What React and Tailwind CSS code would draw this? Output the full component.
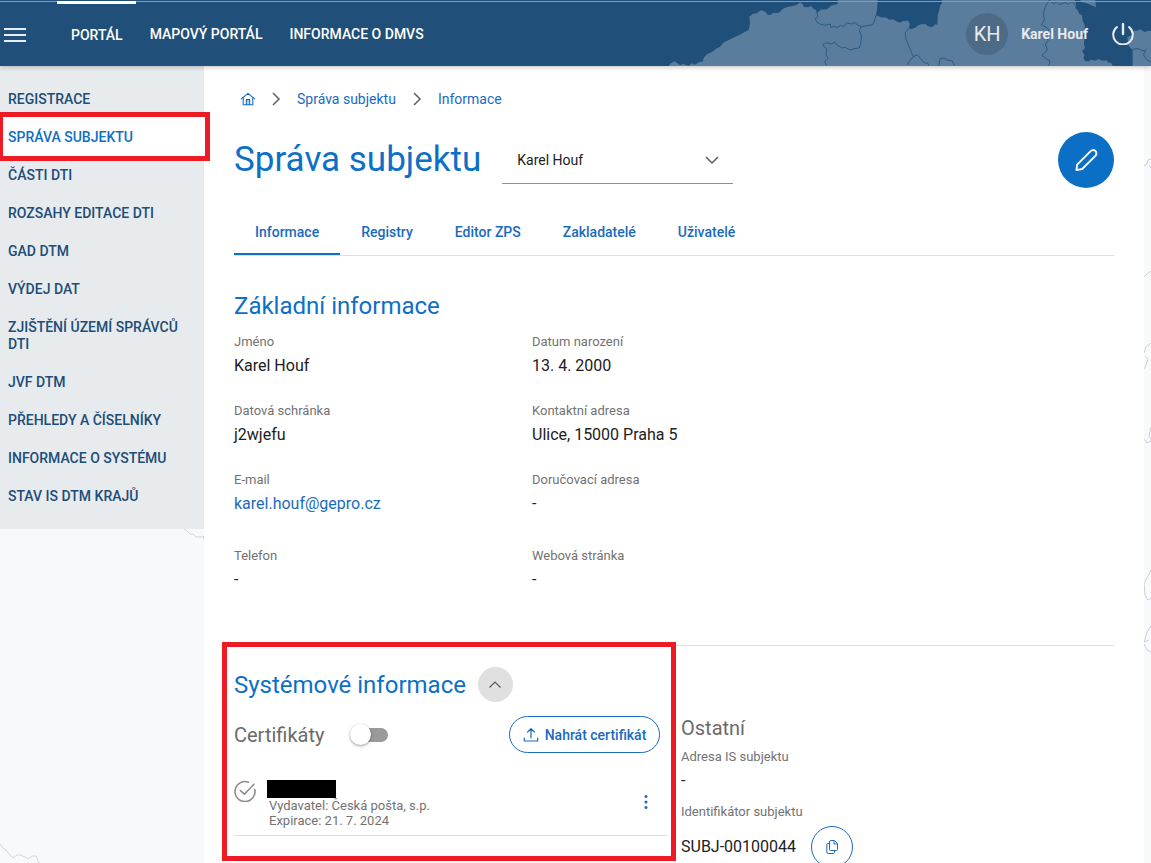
import React from 'react';

const topNav = [
  { label: 'PORTÁL', active: true },
  { label: 'MAPOVÝ PORTÁL' },
  { label: 'INFORMACE O DMVS' },
];

const sideNav = [
  'REGISTRACE',
  'SPRÁVA SUBJEKTU',
  'ČÁSTI DTI',
  'ROZSAHY EDITACE DTI',
  'GAD DTM',
  'VÝDEJ DAT',
  'ZJIŠTĚNÍ ÚZEMÍ SPRÁVCŮ DTI',
  'JVF DTM',
  'PŘEHLEDY A ČÍSELNÍKY',
  'INFORMACE O SYSTÉMU',
  'STAV IS DTM KRAJŮ',
];

const tabs = ['Informace', 'Registry', 'Editor ZPS', 'Zakladatelé', 'Uživatelé'];

function HeaderMap() {
  return (
    <svg className="absolute right-0 top-0 h-[66px] w-[511px]" viewBox="0 0 1533 198" aria-hidden="true">
      <g fill="#5a7d9d">
        <path d="M86 198L92 190L104 184L112 190L120 195L130 192L146 197L156 190L164 194L180 185H188L192 172L202 162L216 156L228 146L240 140L250 128L266 120L282 112L300 104L318 94L326 90L330 70L328 50L338 42L350 40L358 34L364 31L376 35L384 45L392 44L400 39L412 39L420 37L424 30L434 24L446 20L462 17L472 14L480 7L488 12L492 21L506 22L513 17L520 26L528 30L530 38L538 34L541 29L560 28L566 24L572 18L584 14L592 13L595 0H713L711 30L708 45L722 52L740 53L748 59L760 58L768 64L780 68L788 63L804 62L810 72L806 84L814 88L828 82L834 76L846 73L856 72L864 79L876 82L886 73L892 74L893 46L898 30L900 18L906 10V0H1304L1308 14L1306 24L1314 32L1318 42L1326 46L1328 62L1335 78L1332 88L1336 98L1328 106L1333 118L1332 132L1335 144L1326 154L1334 164L1330 174L1336 184L1348 184L1352 179L1366 182L1376 177L1386 182L1400 181L1404 187L1414 189L1418 198Z" />
        <path d="M1320 0H1366L1368 22L1352 15L1338 9L1326 7Z" />
        <path d="M1478 198V150L1466 138L1462 112L1478 104L1480 92L1492 92L1500 88L1514 96L1524 92L1533 93V198Z" />
      </g>
      <g fill="none" stroke="#2b5a83" strokeWidth="3" strokeLinejoin="round">
        <path d="M530 36L534 50L526 56L530 66L540 72L554 76L570 72L574 84L580 78L592 82L602 76L610 80L620 68L634 72L644 68L652 74L664 80L686 76L698 74L704 62L708 45" />
        <path d="M664 80L658 92L664 108L662 132L658 144L642 146L630 150L616 142L606 144L592 136L584 126L574 132L560 128L548 134L552 140L560 146L558 164L564 174L554 186L560 196" />
        <path d="M808 84L796 98L798 118L806 136L812 152L820 170L808 184L802 194" />
        <path d="M820 170L832 164L842 176L852 188L864 190L866 198" />
        <path d="M896 198L900 176L912 174L922 180L936 182L944 198" />
        <path d="M1228 0L1216 20L1210 42L1214 60L1204 74L1216 80L1226 88L1220 104L1224 122L1216 132L1222 150L1206 166L1216 174L1230 184L1226 198" />
        <path d="M1228 0L1240 12L1250 6L1258 14L1274 8L1286 12L1296 4L1306 16" />
        <path d="M1478 148L1494 146L1508 152L1518 150L1510 164L1516 172L1524 182L1533 184" />
      </g>
    </svg>
  );
}

function HomeIcon() {
  return (
    <svg className="h-4 w-4" viewBox="0 0 16 16" fill="none" stroke="currentColor" strokeWidth="1.1" strokeLinecap="round" strokeLinejoin="round" aria-hidden="true">
      <path d="M1.3 7.9L8 2.4L14.7 7.9" />
      <path d="M3.2 6.6V13.8H12.8V6.6" />
      <path d="M6.3 13.6V8.6H9.7V13.6" />
      <path d="M8 9V13.6" strokeWidth="0.6" />
    </svg>
  );
}

function Chevron({ className, d, w = 1.5 }) {
  return (
    <svg className={className} viewBox="0 0 16 16" fill="none" stroke="currentColor" strokeWidth={w} aria-hidden="true">
      <path d={d} />
    </svg>
  );
}

function Field({ label, children, className = 'h-[69px]' }) {
  return (
    <div className={className}>
      <dt className="text-[13px] leading-4 text-[#727272]">{label}</dt>
      <dd className="mt-1 text-base leading-6 text-[#212121]">{children}</dd>
    </div>
  );
}

export default function App() {
  return (
    <div className="flex h-screen flex-col overflow-hidden bg-[#f8f9fb] font-['Roboto','Liberation_Sans',sans-serif]">
      <header className="relative z-10 flex h-[66px] shrink-0 items-stretch bg-[#205079] shadow-[0_1px_5px_rgba(0,0,0,0.25)]">
        <HeaderMap />
        <div className="absolute inset-x-0 top-px h-px bg-[#7f9cb8]" />
        <div className="relative flex flex-1 items-stretch">
          <button type="button" aria-label="Menu" className="flex w-[57px] items-center pl-1 pt-1">
            <svg className="h-4 w-[22px]" viewBox="0 0 22 16" fill="#e9edf2" aria-hidden="true">
              <path d="M0 1h22v2H0zM0 7h22v2H0zM0 13h22v2H0z" />
            </svg>
          </button>
          <nav className="flex items-stretch pt-px text-sm font-medium text-white">
            {topNav.map((n) => (
              <a
                key={n.label}
                href="#"
                className={`flex items-center border-t-3 pl-3.5 pr-[13px] ${n.active ? 'border-white' : 'border-transparent pb-0.5'}`}
              >
                {n.label}
              </a>
            ))}
          </nav>
          <div className="ml-auto flex items-center pr-[17px] pt-0.5">
            <span className="flex h-[42px] w-[42px] items-center justify-center rounded-full bg-[#4d6b87] text-xl text-[#e8eaed]">KH</span>
            <span className="ml-[13px] text-sm font-bold text-[#e8eaed]">Karel Houf</span>
            <button type="button" aria-label="Odhlásit" className="ml-6 text-[#e8eaed]">
              <svg className="h-[22px] w-[22px]" viewBox="0 0 22 22" fill="none" stroke="currentColor" strokeWidth="2" strokeLinecap="round" aria-hidden="true">
                <path d="M11 1V11" strokeWidth="2.4" />
                <path d="M5 4A9.8 9.8 0 1 0 17 4" />
              </svg>
            </button>
          </div>
        </div>
      </header>

      <div className="relative flex min-h-0 flex-1">
        <svg className="absolute bottom-0 left-0 h-[334px] w-[204px]" viewBox="0 0 204 334" fill="none" stroke="#d3d7db" aria-hidden="true">
          <path d="M184 0L187 2L190 5H193L196 8H201L203 7L204 11" />
          <path d="M0 315L3 319L6 321L9 325L13 329L17 326L21 326L25 328L28 330L32 327L36 327L39 334" />
        </svg>
        <svg className="absolute right-0 top-0 h-full w-[7px]" viewBox="0 0 7 797" preserveAspectRatio="xMidYMin slice" fill="none" stroke="#cdd0d3" aria-hidden="true">
          <path d="M0 100L3 98L4 94L7 93M5 99L7 102M0 211L3 208L7 205M7 277L2 281L0 287M1 290L4 293L2 299L0 303M7 361L5 370L7 373M0 373L3 377L7 375M7 504L3 512L0 517L1 529L4 534L7 532M7 560L3 566L0 576L5 574M0 578L3 584L7 586" />
        </svg>

        <aside className="relative w-[204px] shrink-0">
          <nav className="bg-[#e8ebee] pb-[13px] pt-[15px]">
            <ul className="text-sm font-medium leading-[17px] text-[#204d78]">
              {sideNav.map((label) => {
                const active = label === 'SPRÁVA SUBJEKTU';
                return (
                  <li key={label} className="relative">
                    {active && (
                      <span className="pointer-events-none absolute -bottom-[5px] -left-0.5 -right-1.5 -top-[7px] border-[5px] border-[#ed1c24] bg-white" />
                    )}
                    <a
                      href="#"
                      aria-current={active ? 'page' : undefined}
                      className={`relative mb-px block py-[10px] pl-2 pr-4 ${active ? 'text-[#0d6fc6]' : ''}`}
                    >
                      {label}
                    </a>
                  </li>
                );
              })}
            </ul>
          </nav>
        </aside>

        <main className="mr-[7px] min-w-0 flex-1 bg-white px-[30px] pt-6">
          <nav aria-label="Drobečková navigace" className="flex h-[18px] items-center pl-1.5 text-sm text-[#1a6bbd]">
            <a href="#" aria-label="Domů"><HomeIcon /></a>
            <Chevron className="ml-3 mr-[13px] h-4 w-4 text-[#5f5f5f]" d="M5 2L11 8L5 14" />
            <a href="#">Správa subjektu</a>
            <Chevron className="mx-[13px] h-4 w-4 text-[#5f5f5f]" d="M5 2L11 8L5 14" />
            <a href="#">Informace</a>
          </nav>

          <div className="mt-6 flex h-14 items-center">
            <h1 className="text-[35px] leading-10 text-[#0d6fc6]">Správa subjektu</h1>
            <div className="relative ml-[21px] h-12 w-[231px] border-b border-[#8f8f8f]">
              <select aria-label="Subjekt" className="h-full w-full appearance-none bg-transparent pl-[15px] text-sm text-[#212121]">
                <option>Karel Houf</option>
              </select>
              <Chevron className="pointer-events-none absolute right-[13px] top-4 h-4 w-4 text-[#5f5f5f]" d="M2 5L8 11L14 5" />
            </div>
            <button type="button" aria-label="Upravit" className="ml-auto flex h-14 w-14 items-center justify-center rounded-full bg-[#0b70c5] text-white">
              <svg className="h-6 w-6" viewBox="0 0 24 24" fill="none" stroke="currentColor" strokeWidth="1.9" strokeLinejoin="round" aria-hidden="true">
                <path d="M2.4 22.1L3.2 16.6L16.6 3.2A3.1 3.1 0 0 1 21.6 7.6L8.2 21Z" />
              </svg>
            </button>
          </div>

          <div role="tablist" className="mt-5 flex h-12 border-b border-[#dedede] text-sm font-medium text-[#1a6bbd]">
            {tabs.map((t, i) => (
              <button
                key={t}
                type="button"
                role="tab"
                aria-selected={i === 0}
                className={`border-y-2 border-transparent px-[21px] ${i === 0 ? 'border-b-[#0d6fc6]' : ''}`}
              >
                {t}
              </button>
            ))}
          </div>

          <h2 className="mt-[34px] text-2xl text-[#0d6fc6]">Základní informace</h2>
          <dl className="mt-3 grid grid-cols-[298px_1fr]">
            <Field label="Jméno">Karel Houf</Field>
            <Field label="Datum narození">13. 4. 2000</Field>
            <Field label="Datová schránka">j2wjefu</Field>
            <Field label="Kontaktní adresa">Ulice, 15000 Praha 5</Field>
            <Field label="E-mail" className="h-[76px]">
              <a href="mailto:karel.houf@gepro.cz" className="text-[#1a6bbd]">karel.houf@gepro.cz</a>
            </Field>
            <Field label="Doručovací adresa" className="h-[76px]">-</Field>
            <Field label="Telefon" className="h-[97px]">-</Field>
            <Field label="Webová stránka" className="h-[97px]">-</Field>
          </dl>

          <div className="flex border-t border-[#dedede]">
            <section className="relative h-[211px] w-[433px] shrink-0 pt-[21px]">
              <span className="pointer-events-none absolute -bottom-1 -left-3 -right-[9px] -top-1 border-[5px] border-[#ed1c24]" />
              <div className="flex h-[35px] items-center">
                <h2 className="text-2xl text-[#0d6fc6]">Systémové informace</h2>
                <button type="button" aria-label="Sbalit" className="ml-3 flex h-[35px] w-[35px] items-center justify-center rounded-full bg-[#e0e0e0] text-[#5a5a5a]">
                  <Chevron className="h-4 w-4" d="M2.5 10.5L8 5L13.5 10.5" w={1.2} />
                </button>
              </div>
              <div className="mt-3.5 flex h-[37px] items-center pr-[7px]">
                <h3 className="text-xl text-[#6b6b6b]">
                  <label htmlFor="certs">Certifikáty</label>
                </h3>
                <span className="relative ml-[26px] flex h-[21px] w-[38px] items-center">
                  <input id="certs" type="checkbox" role="switch" className="peer ml-1 h-3.5 w-[34px] appearance-none rounded-full bg-[#9a9a9a]" />
                  <span className="pointer-events-none absolute left-0 top-0 h-[21px] w-[21px] rounded-full bg-white shadow-[0_1px_3px_rgba(0,0,0,0.4)] peer-checked:left-[17px]" />
                </span>
                <button type="button" className="ml-auto flex h-[37px] w-[151px] items-center justify-center gap-1.5 rounded-full border border-[#1a6bbd] text-sm font-medium text-[#1a6bbd]">
                  <svg className="h-4 w-4" viewBox="0 0 16 16" fill="none" stroke="currentColor" strokeWidth="1.2" strokeLinecap="round" strokeLinejoin="round" aria-hidden="true">
                    <path d="M8 11V1.8M4.6 5L8 1.6L11.4 5" />
                    <path d="M1.3 11.2V14H14.7V11.2" />
                  </svg>
                  Nahrát certifikát
                </button>
              </div>
              <div className="mt-[27px] flex h-14 border-b border-[#dedede]">
                <svg className="h-[22px] w-[22px] text-[#8c8c8c]" viewBox="0 0 22 22" fill="none" stroke="currentColor" strokeWidth="1.6" strokeLinecap="round" strokeLinejoin="round" aria-hidden="true">
                  <path d="M20.8 9.6A10 10 0 1 1 14.5 2.2" />
                  <path d="M6.4 10.5L10.3 14.2L20 4.2" />
                </svg>
                <div className="ml-[11px]">
                  <div className="h-[18px] w-[69px] bg-black" />
                  <p className="pl-0.5 text-[13px] leading-[15px] text-[#727272]">
                    Vydavatel: Česká pošta, s.p.
                    <br />
                    Expirace: 21. 7. 2024
                  </p>
                </div>
                <button type="button" aria-label="Další akce" className="ml-auto mr-[13px] mt-2.5 h-6 w-4 text-[#1a6bbd]">
                  <svg className="h-6 w-4" viewBox="0 0 16 24" fill="currentColor" aria-hidden="true">
                    <circle cx="8" cy="6.4" r="1.5" />
                    <circle cx="8" cy="12" r="1.5" />
                    <circle cx="8" cy="17.6" r="1.5" />
                  </svg>
                </button>
              </div>
            </section>
            <section className="ml-3.5 pt-[68px]">
              <h3 className="text-xl text-[#6b6b6b]">Ostatní</h3>
              <dl className="mt-[7px]">
                <Field label="Adresa IS subjektu" className="h-[55px]">-</Field>
                <dt className="text-[13px] leading-4 text-[#727272]">Identifikátor subjektu</dt>
                <dd className="mt-1.5 flex items-center text-base text-[#212121]">
                  SUBJ-00100044
                  <button type="button" aria-label="Kopírovat" className="ml-[15px] flex h-[42px] w-[42px] items-center justify-center rounded-full border border-[#1a6bbd] text-[#1a6bbd]">
                    <svg className="h-4 w-4" viewBox="0 0 16 16" fill="none" stroke="currentColor" strokeLinejoin="round" aria-hidden="true">
                      <path d="M7 1.5H10.4L13.5 4.6V10.5Q13.5 11.5 12.5 11.5H6.5Q5.5 11.5 5.5 10.5V3Q5.5 1.5 7 1.5Z" />
                      <path d="M10 1.5V5H13.5" />
                      <path d="M5.5 4.5H4Q2.8 4.5 2.8 5.7V13Q2.8 14.5 4.2 14.5H9.5Q10.5 14.5 10.5 13.5V11.5" />
                    </svg>
                  </button>
                </dd>
              </dl>
            </section>
          </div>
        </main>
      </div>
    </div>
  );
}
